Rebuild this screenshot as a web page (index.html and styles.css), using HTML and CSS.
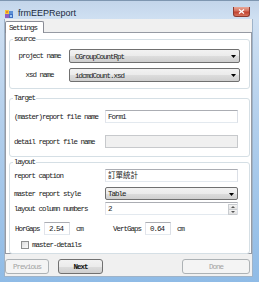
FILE: index.html
```html
<!DOCTYPE html>
<html lang="en">
<head>
    <meta charset="UTF-8">
    <title>frmEEPReport</title>
    <link rel="stylesheet" href="styles.css">
</head>
<body>
<div class="window">
    <div class="titlebar">
        <svg class="app-icon" width="8" height="8" viewBox="0 0 8 8">
            <rect x="0" y="0" width="4" height="4" fill="#f6c53c"/>
            <rect x="1" y="1" width="2" height="2" fill="#e8872a"/>
            <rect x="4" y="1" width="4" height="3" fill="#5b8fd6"/>
            <rect x="0" y="4" width="4" height="4" fill="#8e5fc2"/>
            <rect x="4" y="4" width="4" height="4" fill="#3f6fc4"/>
            <rect x="5" y="5" width="2" height="2" fill="#9cc7f2"/>
        </svg>
        <span class="title">frmEEPReport</span>
        <span class="close">
            <svg width="7" height="5" viewBox="0 0 7 5"><path d="M1 0.5 L6 4.5 M6 0.5 L1 4.5" stroke="#fff" stroke-width="1.3"/></svg>
        </span>
    </div>
    <div class="client">
        <div class="tabs"><span class="tab">Settings</span></div>
        <div class="tab-page">
            <div class="group group-source">
                <div class="group-title">source</div>
                <div class="row row-first">
                    <label class="lbl lbl-center">project name</label>
                    <div class="combo combo-wide">CGroupCountRpt<svg class="arrow" width="5" height="3" viewBox="0 0 5 3"><path d="M0 0 H5 L2.5 3 Z" fill="#000"/></svg></div>
                </div>
                <div class="row row-second">
                    <label class="lbl lbl-center">xsd name</label>
                    <div class="combo combo-wide">idcmdCount.xsd<svg class="arrow" width="5" height="3" viewBox="0 0 5 3"><path d="M0 0 H5 L2.5 3 Z" fill="#000"/></svg></div>
                </div>
            </div>

            <div class="group group-target">
                <div class="group-title">Target</div>
                <div class="row row-t1">
                    <label class="lbl lbl-left">(master)report file name</label>
                    <div class="textbox">Form1</div>
                </div>
                <div class="row row-t2">
                    <label class="lbl lbl-left">detail report file name</label>
                    <div class="textbox disabled"></div>
                </div>
            </div>

            <div class="group group-layout">
                <div class="group-title">layout</div>
                <div class="row row-l1">
                    <label class="lbl lbl-left">report caption</label>
                    <div class="textbox cjk">訂單統計</div>
                </div>
                <div class="row row-l2">
                    <label class="lbl lbl-left">master report style</label>
                    <div class="combo">Table<svg class="arrow" width="5" height="3" viewBox="0 0 5 3"><path d="M0 0 H5 L2.5 3 Z" fill="#000"/></svg></div>
                </div>
                <div class="row row-l3">
                    <label class="lbl lbl-left">layout column numbers</label>
                    <div class="textbox numeric">2
                        <span class="spin">
                            <span class="spin-btn"><svg width="4" height="2" viewBox="0 0 4 2"><path d="M0 2 H4 L2 0 Z" fill="#555"/></svg></span>
                            <span class="spin-btn"><svg width="4" height="2" viewBox="0 0 4 2"><path d="M0 0 H4 L2 2 Z" fill="#555"/></svg></span>
                        </span>
                    </div>
                </div>
                <div class="row row-l4">
                    <label class="lbl gap-label">HorGaps</label>
                    <div class="textbox small">2.54</div>
                    <span class="unit">cm</span>
                    <label class="lbl gap-label vert">VertGaps</label>
                    <div class="textbox small">0.64</div>
                    <span class="unit">cm</span>
                </div>
                <div class="row row-l5">
                    <span class="checkbox"></span>
                    <label class="lbl">master-details</label>
                </div>
            </div>
        </div>
        <div class="buttons">
            <button class="btn btn-prev" disabled>Previous</button>
            <button class="btn btn-next">Next</button>
            <button class="btn btn-done" disabled>Done</button>
        </div>
    </div>
</div>
</body>
</html>
```

FILE: styles.css
```css
html,body{margin:0;padding:0;}
body{width:259px;height:282px;overflow:hidden;background:#b7cfe9;}

.window{width:259px;height:282px;box-sizing:border-box;border-top:1px solid #7e96b0;padding-bottom:5px;display:flex;flex-direction:column;
    background:linear-gradient(to bottom,#c3d5ea 0,#cfe0f2 18px,#b3cfec 120px,#8fbbe6 282px);}

/* title bar */
.titlebar{height:18px;box-sizing:border-box;padding:6px 0 0 5px;display:flex;align-items:center;}
.app-icon{display:block;margin-top:1px;}
.title{margin-left:5px;font:9px/10px "Liberation Sans",Arial,sans-serif;color:#1b2b3e;}
.close{align-self:flex-start;margin-left:auto;margin-right:9px;width:17px;height:10px;box-sizing:border-box;border:1px solid #8b3b31;border-top:none;border-radius:0 0 3px 3px;display:flex;align-items:center;justify-content:center;
    background:linear-gradient(to bottom,#e9a797 0,#d4705d 45%,#c0412f 55%,#d8765f 100%);}
.close svg{display:block;}

/* client area */
.client{flex:1;margin:0 6px 0 4px;background:#f0f0f0;border:1px solid #9eb3c9;border-top:none;display:flex;flex-direction:column;
    font:7.5px/10px "Liberation Mono","Noto Sans CJK TC",monospace;letter-spacing:-1px;color:#1a1a1a;}

.tabs{height:13px;display:flex;}
.tab{margin-top:2px;height:12px;width:39px;box-sizing:border-box;padding:1px 0 0 3px;background:#fff;border:1px solid #898c95;border-bottom:none;border-radius:2px 2px 0 0;position:relative;z-index:1;}

.tab-page{height:222px;box-sizing:border-box;border:1px solid #969aa3;background:#fff;padding:0 1px 0 3px;}

/* group boxes */
.group{border:1px solid #d5dfe5;border-radius:3px;}
.group-title{width:fit-content;height:10px;margin:-6px 0 0 3px;padding:0 1px;background:#fff;}
.group-source{margin-top:6px;padding-bottom:6px;}
.group-target{margin-top:9px;padding-bottom:8px;}
.group-layout{margin-top:5px;padding-bottom:3px;}

.row{display:flex;align-items:center;}
.row-first{margin-top:5px;}
.row-second{margin-top:5px;}
.row-t1{margin-top:7px;}
.row-t2{margin-top:12px;}
.row-l1{margin-top:2px;}
.row-l2{margin-top:5px;}
.row-l3{margin-top:2px;}
.row-l4{margin-top:7px;}
.row-l5{margin-top:5px;}

.lbl{white-space:nowrap;}
.lbl-center{width:59px;text-align:center;flex:none;}
.lbl-left{width:95px;box-sizing:border-box;padding-left:4px;flex:none;}

/* controls */
.combo{width:133px;height:13px;box-sizing:border-box;border:1px solid #707070;border-radius:2px;padding:1px 0 0 2px;display:flex;align-items:center;
    background:linear-gradient(to bottom,#f2f2f2 0,#ebebeb 50%,#dddddd 51%,#cfcfcf 100%);}
.combo-wide{width:171px;height:14px;padding-left:5px;}
.combo .arrow{margin-left:auto;margin-right:3px;display:block;}

.textbox{width:133px;height:13px;box-sizing:border-box;border:1px solid;border-color:#abadb3 #dbdfe6 #e3e9ef #e2e3ea;background:#fff;padding:1px 0 0 2px;display:flex;align-items:center;}
.textbox.disabled{background:#f0f0f0;border-color:#c7c9cc;}
.textbox.cjk{letter-spacing:0;padding-left:2px;}
.spin{margin-left:auto;width:9px;height:11px;display:flex;flex-direction:column;}
.spin-btn{flex:1;display:flex;align-items:center;justify-content:center;background:linear-gradient(to bottom,#f4f4f4,#e2e2e2);border:1px solid #c9ccd0;border-right:none;}
.spin-btn + .spin-btn{border-top:none;}
.spin-btn svg{display:block;}

.gap-label{flex:none;box-sizing:border-box;width:34px;padding-left:5px;}
.gap-label.vert{width:55px;padding-left:23px;}
.textbox.small{flex:none;width:26px;padding-left:4px;}
.unit{flex:none;width:14px;margin-left:6px;}

.checkbox{flex:none;width:8px;height:8px;box-sizing:border-box;margin:0 3px 0 11px;border:1px solid #8e8f8f;background:linear-gradient(135deg,#dcdcdc,#fbfbfb);}

/* bottom buttons */
.buttons{display:flex;padding-top:5px;}
.btn{height:15px;box-sizing:border-box;padding:0;border:1px solid #707070;border-radius:3px;font:inherit;letter-spacing:inherit;color:#111;
    background:linear-gradient(to bottom,#f2f2f2 0,#ebebeb 50%,#dddddd 51%,#cfcfcf 100%);}
.btn:disabled{border-color:#adb2b5;background:#f4f4f4;color:#a3a3a3;}
.btn-prev{width:44px;}
.btn-next{width:45px;margin-left:9px;font-weight:bold;}
.btn-done{width:68px;margin-left:auto;margin-right:2px;}
```
